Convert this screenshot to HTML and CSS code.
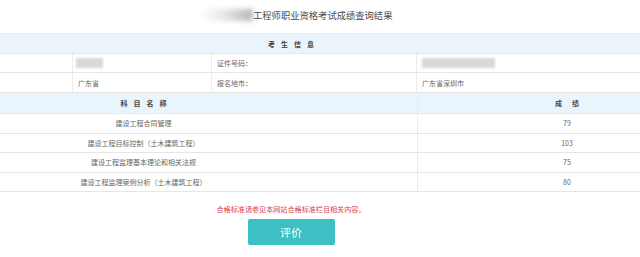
FILE: index.html
```html
<!DOCTYPE html>
<html lang="zh-CN">
<head>
<meta charset="utf-8">
<title>工程师职业资格考试成绩查询结果</title>
<link rel="stylesheet" href="styles.css">
</head>
<body>
<div class="page">
  <div class="title-row">
    <span class="title-blur"></span>
    <h1 class="title">工程师职业资格考试成绩查询结果</h1>
  </div>

  <div class="info">
    <div class="head head-info"><span class="sp6">考生信息</span></div>
    <div class="info-row">
      <div class="cell"></div>
      <div class="cell"><span class="mask mask-s"></span></div>
      <div class="cell">证件号码：</div>
      <div class="cell"><span class="mask mask-l"></span></div>
    </div>
    <div class="info-row">
      <div class="cell"></div>
      <div class="cell">广东省</div>
      <div class="cell">报名地市：</div>
      <div class="cell">广东省深圳市</div>
    </div>
  </div>

  <div class="scores">
    <div class="score-row head">
      <div class="sub"><span class="sp6">科目名称</span></div>
      <div class="val"><span class="sp10">成绩</span></div>
    </div>
    <div class="score-row">
      <div class="sub">建设工程合同管理</div>
      <div class="val">79</div>
    </div>
    <div class="score-row">
      <div class="sub">建设工程目标控制（土木建筑工程）</div>
      <div class="val">103</div>
    </div>
    <div class="score-row">
      <div class="sub">建设工程监理基本理论和相关法规</div>
      <div class="val">75</div>
    </div>
    <div class="score-row">
      <div class="sub">建设工程监理案例分析（土木建筑工程）</div>
      <div class="val">80</div>
    </div>
  </div>

  <div class="footer">
    <p class="note">合格标准请参见本网站合格标准栏目相关内容。</p>
    <button class="btn" type="button">评价</button>
  </div>
</div>
</body>
</html>
```

FILE: styles.css
```css
* { box-sizing: border-box; }
html, body { margin: 0; padding: 0; background: #ffffff; }
body {
  font-family: "Noto Sans CJK SC", "Noto Sans", sans-serif;
  color: #666666;
  font-size: 7px;
  width: 640px;
  height: 257px;
  overflow: hidden;
}
.page { width: 640px; }

.title-row {
  height: 33px;
  display: flex;
  align-items: center;
  padding-left: 200px;
  padding-bottom: 4px;
}
.title-blur {
  width: 53px;
  height: 12px;
  background: linear-gradient(90deg, rgba(220,220,220,0) 0%, rgba(200,200,200,0.5) 50%, rgba(170,170,170,0.85) 100%);
  filter: blur(2.5px);
}
.title {
  margin: 0;
  font-size: 9.3px;
  font-weight: normal;
  color: #4a4a4a;
  line-height: 12px;
}

.info { border-top: 1px solid #e3ebf2; }
.head {
  background: #eaf4fc;
  color: #444444;
  font-weight: bold;
}
.head-info {
  height: 20px;
  display: flex;
  align-items: center;
  justify-content: center;
  padding-right: 52px;
  border-bottom: 1px solid #e3e8ec;
}
.sp6 { letter-spacing: 6px; }
.sp10 { letter-spacing: 10px; padding-left: 10px; }

.info-row {
  display: grid;
  grid-template-columns: 73px 139px 205px 1fr;
  height: 19px;
  border-bottom: 1px solid #e6e6e6;
}
.info-row + .info-row { height: 20px; }
.cell {
  display: flex;
  align-items: center;
  padding-left: 5px;
  border-right: 1px solid #ececec;
  color: #666666;
}
.cell:last-child { border-right: none; }
.mask {
  display: block;
  height: 10px;
  background: #d9d9d9;
  filter: blur(0.8px);
}
.mask-s { width: 27px; margin-left: -2px; }
.mask-l { width: 73px; }

.score-row {
  display: grid;
  grid-template-columns: 418px 1fr;
  height: 19.5px;
  border-bottom: 1px solid #e6e6e6;
}
.score-row.head { height: 21px; border-bottom-color: #e3e8ec; }
.sub {
  display: flex;
  align-items: center;
  justify-content: center;
  padding-right: 130px;
  border-right: 1px solid #ececec;
  color: #666666;
}
.score-row.head .sub { padding-left: 6px; color: #444444; }
.val {
  display: flex;
  align-items: center;
  justify-content: center;
  padding-left: 76px;
  color: #666666;
}
.score-row.head .val { color: #444444; }

.footer {
  width: 582px;
  display: flex;
  flex-direction: column;
  align-items: center;
  padding-top: 12px;
}
.note {
  margin: 0;
  color: #d9434c;
  font-size: 7.1px;
  line-height: 10px;
}
.btn {
  margin-top: 5px;
  width: 87px;
  height: 26px;
  border: none;
  border-radius: 2px;
  background: #3dc0c4;
  color: #ffffff;
  font-family: serif, "Noto Sans CJK SC";
  font-size: 11px;
  font-weight: normal;
  padding: 0;
}
```
